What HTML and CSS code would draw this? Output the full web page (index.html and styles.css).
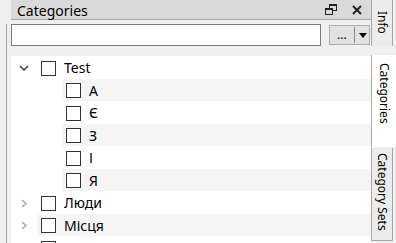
FILE: index.html
```html
<!DOCTYPE html>
<html>
<head>
<meta charset="utf-8">
<link rel="stylesheet" href="styles.css">
</head>
<body>
<div class="app">
  <div class="edge"><div class="edge-line"></div></div>
  <div class="panel">
    <div class="titlebar">
      <span class="title">Categories</span>
      <span class="tb-icons">
        <svg class="ic-float" width="12" height="11" viewBox="0 0 12 11">
          <rect x="4.5" y="0.5" width="7" height="6" fill="none" stroke="#222" stroke-width="1"/>
          <rect x="4" y="0" width="8" height="2" fill="#222"/>
          <rect x="0.5" y="4.5" width="7" height="6" fill="#dadada" stroke="#222" stroke-width="1"/>
          <rect x="0" y="4" width="8" height="2" fill="#222"/>
        </svg>
        <svg class="ic-close" width="10" height="10" viewBox="0 0 10 10">
          <path d="M1 1L9 9M9 1L1 9" stroke="#222" stroke-width="2" fill="none"/>
        </svg>
      </span>
    </div>
    <div class="search">
      <div class="input"></div>
      <div class="btn">
        <span class="dots">...</span>
        <span class="sep"></span>
        <span class="arrow">
          <svg width="8" height="5" viewBox="0 0 8 5"><path d="M0 0H8L4 5Z" fill="#000"/></svg>
        </span>
      </div>
    </div>
    <div class="tree">
      <div class="row">
        <span class="branch"><svg width="10" height="6" viewBox="0 0 10 6"><path d="M1 1L5 5L9 1" stroke="#404040" stroke-width="1.5" fill="none"/></svg></span>
        <span class="item"><span class="cb"></span><span class="label">Test</span></span>
      </div>
      <div class="row child">
        <span class="branch"></span>
        <span class="item"><span class="cb"></span><span class="label">A</span></span>
      </div>
      <div class="row child">
        <span class="branch"></span>
        <span class="item"><span class="cb"></span><span class="label">Є</span></span>
      </div>
      <div class="row child">
        <span class="branch"></span>
        <span class="item"><span class="cb"></span><span class="label">З</span></span>
      </div>
      <div class="row child">
        <span class="branch"></span>
        <span class="item"><span class="cb"></span><span class="label">І</span></span>
      </div>
      <div class="row child">
        <span class="branch"></span>
        <span class="item"><span class="cb"></span><span class="label">Я</span></span>
      </div>
      <div class="row">
        <span class="branch"><svg width="6" height="9" viewBox="0 0 6 9"><path d="M1 1L5 4.5L1 8" stroke="#a6a6a6" stroke-width="1.5" fill="none"/></svg></span>
        <span class="item"><span class="cb"></span><span class="label">Люди</span></span>
      </div>
      <div class="row">
        <span class="branch"><svg width="6" height="9" viewBox="0 0 6 9"><path d="M1 1L5 4.5L1 8" stroke="#a6a6a6" stroke-width="1.5" fill="none"/></svg></span>
        <span class="item"><span class="cb"></span><span class="label">Місця</span></span>
      </div>
      <div class="row">
        <span class="branch"><svg width="6" height="9" viewBox="0 0 6 9"><path d="M1 1L5 4.5L1 8" stroke="#a6a6a6" stroke-width="1.5" fill="none"/></svg></span>
        <span class="item"><span class="cb"></span><span class="label">Події</span></span>
      </div>
    </div>
  </div>
  <div class="tabs">
    <div class="tab tab-info"><span class="tab-text">Info</span></div>
    <div class="tab tab-active"><span class="tab-text">Categories</span></div>
    <div class="tab tab-sets"><span class="tab-text">Category Sets</span></div>
  </div>
</div>
</body>
</html>
```

FILE: styles.css
```css
html, body {
  margin: 0;
  height: 100%;
  background: #f0f0f0;
  overflow: hidden;
}
.app {
  display: flex;
  height: 243px;
  font-family: "Noto Sans", "DejaVu Sans", sans-serif;
  color: #000;
}
.edge {
  width: 11px;
  flex: none;
  padding-top: 24px;
  box-sizing: border-box;
  display: flex;
}
.edge-line {
  margin-left: 6px;
  width: 1px;
  background: #a0a0a0;
}
.panel {
  width: 360px;
  flex: none;
  display: flex;
  flex-direction: column;
}
.titlebar {
  height: 19px;
  background: #dadada;
  border-bottom: 1px solid #a9a9a9;
  display: flex;
  align-items: center;
  padding-left: 6px;
  padding-right: 9px;
}
.title {
  font-size: 14px;
  line-height: 19px;
  padding-top: 1px;
}
.tb-icons {
  margin-left: auto;
  display: flex;
  align-items: center;
  gap: 15px;
}
.search {
  margin-top: 4px;
  height: 22px;
  display: flex;
  align-items: center;
}
.input {
  width: 310px;
  height: 22px;
  box-sizing: border-box;
  border: 1px solid #7a7a7a;
  background: #fff;
}
.btn {
  margin-left: 8px;
  width: 41px;
  height: 20px;
  box-sizing: border-box;
  border: 1px solid #adadad;
  background: #e1e1e1;
  display: flex;
  align-items: center;
}
.dots {
  width: 24px;
  box-sizing: border-box;
  padding-left: 7px;
  font-size: 12px;
  line-height: 18px;
}
.sep {
  width: 1px;
  height: 16px;
  background: #8c8c8c;
}
.arrow {
  flex: 1;
  display: flex;
  justify-content: center;
  padding-left: 1px;
}
.tree {
  margin-top: 10px;
  flex: 1;
  background: #fff;
  overflow: hidden;
}
.row {
  display: flex;
  height: 22.5px;
}
.row.child {
  padding-left: 25px;
}
.branch {
  width: 26px;
  flex: none;
  display: flex;
  align-items: center;
  justify-content: center;
  padding-top: 2px;
}
.item {
  flex: 1;
  display: flex;
  align-items: center;
  padding-left: 4px;
  padding-top: 2px;
  gap: 8px;
}
.row:nth-child(even) .item {
  background: #f5f5f5;
}
.cb {
  width: 13px;
  height: 13px;
  border: 1px solid #333;
  background: #fff;
  flex: none;
}
.label {
  font-size: 14px;
  line-height: 20px;
}
.tabs {
  width: 25px;
  flex: none;
  display: flex;
  flex-direction: column;
  align-items: flex-start;
}
.tab {
  box-sizing: border-box;
  border-left: 1px solid #a8a8a8;
  display: flex;
  justify-content: center;
}
.tab-text {
  writing-mode: vertical-rl;
  font-size: 12px;
  line-height: 20px;
}
.tab-info {
  width: 22px;
  height: 46px;
  background: #ececec;
  border-right: 1px solid #a8a8a8;
  padding-top: 11px;
}
.tab-active {
  margin-top: 9px;
  width: 25px;
  height: 92px;
  background: #fff;
  padding-top: 8px;
}
.tab-sets {
  margin-top: 1px;
  width: 22px;
  height: 93px;
  background: #ececec;
  border-right: 1px solid #a8a8a8;
  border-bottom: 1px solid #a8a8a8;
  padding-top: 5px;
}
```
